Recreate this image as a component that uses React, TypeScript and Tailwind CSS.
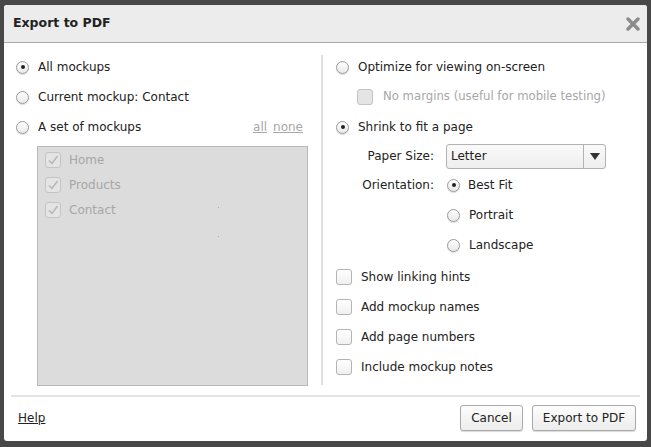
import React from "react";

const font = { fontFamily: '"DejaVu Sans", "Liberation Sans", sans-serif' };

function Radio({ checked = false }: { checked?: boolean }) {
    return (
        <span className="w-[13px] h-[13px] rounded-full border border-[#9a9a9a] bg-gradient-to-b from-white to-[#e9e9e9] shadow-[0_1px_1px_rgba(0,0,0,0.15)] flex items-center justify-center shrink-0">
            {checked && <span className="w-[4px] h-[4px] rounded-full bg-[#222]" />}
        </span>
    );
}

function Check({ checked = false, dim = false }: { checked?: boolean; dim?: boolean }) {
    return (
        <span
            className={`w-[16px] h-[16px] rounded-[3px] border flex items-center justify-center shrink-0 ${
                dim ? "border-[#c4c4c4] bg-[#e4e4e4]" : "border-[#b3b3b3] bg-gradient-to-b from-white to-[#f0f0f0]"
            }`}
        >
            {checked && (
                <svg width="12" height="12" viewBox="0 0 12 12">
                    <path d="M2 6.5 L5 9.5 L10.5 2" fill="none" stroke="#b5b5b5" strokeWidth="1.4" />
                </svg>
            )}
        </span>
    );
}

function RadioRow({ label, checked, h = "h-[30px]" }: { label: string; checked?: boolean; h?: string }) {
    return (
        <div className={`flex items-center gap-[9px] ${h}`}>
            <Radio checked={checked} />
            <span className="text-[12px] text-[#222]">{label}</span>
        </div>
    );
}

export default function App() {
    return (
        <div className="w-[651px] h-[447px] bg-[#484848] pt-[5px] pl-[4px] pr-[4px] pb-[6px]" style={font}>
            <div className="bg-white rounded-[3px] h-full flex flex-col overflow-hidden">
                {/* Header */}
                <div className="h-[38px] bg-[#ececec] border-b border-[#a9a9a9] flex items-center justify-between pl-[9px] pr-[7px] shrink-0">
                    <span className="text-[12.5px] font-bold text-[#222]">Export to PDF</span>
                    <svg width="14" height="14" viewBox="0 0 14 14">
                        <path d="M2 2 L12 12 M12 2 L2 12" stroke="#8a8a8a" strokeWidth="3.4" strokeLinecap="round" />
                    </svg>
                </div>

                {/* Body */}
                <div className="flex pt-[9px] h-[352px] shrink-0">
                    {/* Left */}
                    <div className="w-[317px] pl-[12px] pr-[10px] shrink-0">
                        <RadioRow label="All mockups" checked />
                        <RadioRow label="Current mockup: Contact" />
                        <div className="flex items-center h-[30px] pr-[8px]">
                            <div className="flex items-center gap-[9px] flex-1">
                                <Radio />
                                <span className="text-[12px] text-[#222]">A set of mockups</span>
                            </div>
                            <span className="text-[12px] text-[#a8a8a8] underline">all</span>
                            <span className="text-[12px] text-[#a8a8a8] underline ml-[6px]">none</span>
                        </div>
                        <div className="mt-[4px] ml-[21px] w-[271px] h-[240px] bg-[#dcdcdc] border border-[#b9b9b9] relative">
                            {["Home", "Products", "Contact"].map((n) => (
                                <div key={n} className="flex items-center h-[25px] pl-[7px] gap-[8px]">
                                    <Check checked dim />
                                    <span className="text-[12px] text-[#a7a7a7]">{n}</span>
                                </div>
                            ))}
                            <span className="absolute left-[180px] top-[60px] w-px h-px bg-[#aaa]" />
                            <span className="absolute left-[180px] top-[89px] w-px h-px bg-[#aaa]" />
                        </div>
                    </div>

                    {/* Divider */}
                    <div className="w-[2px] bg-[#e1e1e1] mt-[3px] h-[330px] shrink-0" />

                    {/* Right */}
                    <div className="flex-1 pl-[13px]">
                        <RadioRow label="Optimize for viewing on-screen" />
                        <div className="flex items-center h-[30px] pl-[21px] gap-[10px]">
                            <Check dim />
                            <span className="text-[11.7px] text-[#a7a7a7]">No margins (useful for mobile testing)</span>
                        </div>
                        <RadioRow label="Shrink to fit a page" checked />
                        <div className="flex items-center h-[28px]">
                            <span className="w-[98px] text-right text-[12px] text-[#222]">Paper Size:</span>
                            <div className="ml-[12px] w-[160px] h-[25px] border border-[#b2b2b2] rounded-[3px] bg-gradient-to-b from-[#fafafa] to-[#eeeeee] flex">
                                <span className="flex-1 flex items-center pl-[4px] text-[12px] text-[#222]">Letter</span>
                                <span className="w-[22px] border-l border-[#b2b2b2] flex items-center justify-center">
                                    <svg width="10" height="7" viewBox="0 0 10 7">
                                        <path d="M0 0 H10 L5 7 Z" fill="#333" />
                                    </svg>
                                </span>
                            </div>
                        </div>
                        <div className="flex items-center h-[30px]">
                            <span className="w-[98px] text-right text-[12px] text-[#222]">Orientation:</span>
                            <div className="ml-[13px] flex items-center gap-[8px]">
                                <Radio checked />
                                <span className="text-[12px] text-[#222]">Best Fit</span>
                            </div>
                        </div>
                        <div className="pl-[111px]">
                            <RadioRow label="Portrait" />
                            <RadioRow label="Landscape" />
                        </div>
                        <div className="mt-[2px]">
                            {["Show linking hints", "Add mockup names", "Add page numbers", "Include mockup notes"].map((l) => (
                                <div key={l} className="flex items-center h-[30px] gap-[9px]">
                                    <Check />
                                    <span className="text-[12px] text-[#222]">{l}</span>
                                </div>
                            ))}
                        </div>
                    </div>
                </div>

                {/* Footer */}
                <div className="mx-[7px] h-[2px] bg-[#e3e3e3] shrink-0" />
                <div className="flex items-center justify-between flex-1 pl-[14px] pr-[11px] pb-[2px]">
                    <span className="text-[12px] text-[#222] underline">Help</span>
                    <div className="flex gap-[9px]">
                        <button className="h-[26px] w-[63px] border border-[#a9a9a9] rounded-[3px] bg-gradient-to-b from-[#fdfdfd] to-[#ececec] shadow-[0_1px_1px_rgba(0,0,0,0.15)] text-[12px] text-[#222]">
                            Cancel
                        </button>
                        <button className="h-[26px] w-[104px] border border-[#a9a9a9] rounded-[3px] bg-gradient-to-b from-[#fdfdfd] to-[#ececec] shadow-[0_1px_1px_rgba(0,0,0,0.15)] text-[12px] text-[#222]">
                            Export to PDF
                        </button>
                    </div>
                </div>
            </div>
        </div>
    );
}
